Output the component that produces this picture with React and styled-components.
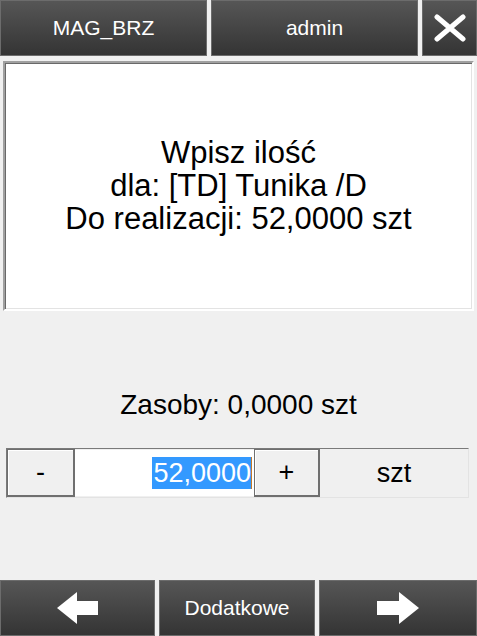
import React from "react";
import styled, { createGlobalStyle } from "styled-components";

const Global = createGlobalStyle`
  html, body { margin: 0; padding: 0; background: #f0f0f0; }
  body { font-family: "Liberation Sans", Arial, sans-serif; }
  * { box-sizing: border-box; }
`;

const Screen = styled.div`
  width: 477px;
  height: 636px;
  display: flex;
  flex-direction: column;
  background: #f0f0f0;
  overflow: hidden;
`;

const Bar = styled.div`
  display: grid;
  grid-template-columns: ${(p) => p.$cols};
  column-gap: ${(p) => p.$gap}px;
  height: 56px;
  flex: none;
`;

const DarkButton = styled.button`
  height: 100%;
  margin: 0;
  padding: 0;
  border: 1px solid #6c6c6c;
  background: linear-gradient(#565656, #343434);
  color: #fff;
  font-family: "Liberation Sans", Arial, sans-serif;
  font-size: 21px;
  display: flex;
  align-items: center;
  justify-content: center;
  cursor: pointer;
`;

const Panel = styled.div`
  margin: 5px 3px 0 3px;
  height: 250px;
  flex: none;
  background: #fff;
  border: 2px solid;
  border-color: #a0a0a0 #fff #fff #a0a0a0;
  box-shadow: inset 1px 1px 0 #696969, inset -1px -1px 0 #e3e3e3;
  display: flex;
  flex-direction: column;
  align-items: center;
  justify-content: center;
  text-align: center;
  font-size: 31px;
  line-height: 33px;
  color: #000;
  padding-bottom: 2px;
`;

const Stock = styled.div`
  margin-top: 78px;
  height: 32px;
  line-height: 32px;
  font-size: 28px;
  text-align: center;
  color: #000;
  flex: none;
`;

const QtyRow = styled.div`
  margin: 27px 8px 0 6px;
  height: 50px;
  flex: none;
  display: grid;
  grid-template-columns: 68px 179px 66px 1fr;
  border: 1px solid;
  border-color: #7a7a7a #e3e3e3 #e3e3e3 #7a7a7a;
`;

const LightButton = styled.div`
  background: #f0f0f0;
  border: 1px solid #6f6f6f;
  border-right-width: 2px;
  border-bottom-width: 2px;
  box-shadow: inset 1px 1px 0 #fff;
  display: flex;
  align-items: center;
  justify-content: center;
  font-size: 27px;
  color: #000;
`;

const Input = styled.div`
  background: #fff;
  margin: 1px 0 1px 0;
  display: flex;
  align-items: center;
  justify-content: flex-end;
  padding-right: 2px;
  font-size: 27px;
`;

const Selected = styled.span`
  background: #3399ff;
  color: #fff;
  line-height: 32px;
  height: 32px;
  padding: 0 0 0 1px;
  border-right: 1px solid #c47a2c;
`;

const UnitCell = styled.div`
  display: flex;
  align-items: center;
  justify-content: center;
  font-size: 27px;
  color: #000;
`;

const Spacer = styled.div`
  flex: 1;
`;

const CloseIcon = () => (
  <svg width="34" height="28" viewBox="0 0 34 28">
    <path d="M4 3 L30 25 M30 3 L4 25" stroke="#fff" strokeWidth="5" strokeLinecap="round" fill="none" />
  </svg>
);

const ArrowLeft = () => (
  <svg width="42" height="32" viewBox="0 0 42 32">
    <polygon points="0,16 20,0 20,9 41,9 41,23 20,23 20,32" fill="#fff" />
  </svg>
);

const ArrowRight = () => (
  <svg width="42" height="32" viewBox="0 0 42 32">
    <polygon points="42,16 22,0 22,9 0,9 0,23 22,23 22,32" fill="#fff" />
  </svg>
);

export default function App() {
  return (
    <>
      <Global />
      <Screen>
        <Bar $cols="207px 207px 1fr" $gap={4}>
          <DarkButton>MAG_BRZ</DarkButton>
          <DarkButton>admin</DarkButton>
          <DarkButton aria-label="Zamknij">
            <CloseIcon />
          </DarkButton>
        </Bar>
        <Panel>
          <div>Wpisz ilość</div>
          <div>dla: [TD] Tunika /D</div>
          <div>Do realizacji: 52,0000 szt</div>
        </Panel>
        <Stock>Zasoby: 0,0000 szt</Stock>
        <QtyRow>
          <LightButton>-</LightButton>
          <Input>
            <Selected>52,0000</Selected>
          </Input>
          <LightButton>+</LightButton>
          <UnitCell>szt</UnitCell>
        </QtyRow>
        <Spacer />
        <Bar $cols="155px 156px 1fr" $gap={4}>
          <DarkButton aria-label="Wstecz">
            <ArrowLeft />
          </DarkButton>
          <DarkButton>Dodatkowe</DarkButton>
          <DarkButton aria-label="Dalej">
            <ArrowRight />
          </DarkButton>
        </Bar>
      </Screen>
    </>
  );
}
